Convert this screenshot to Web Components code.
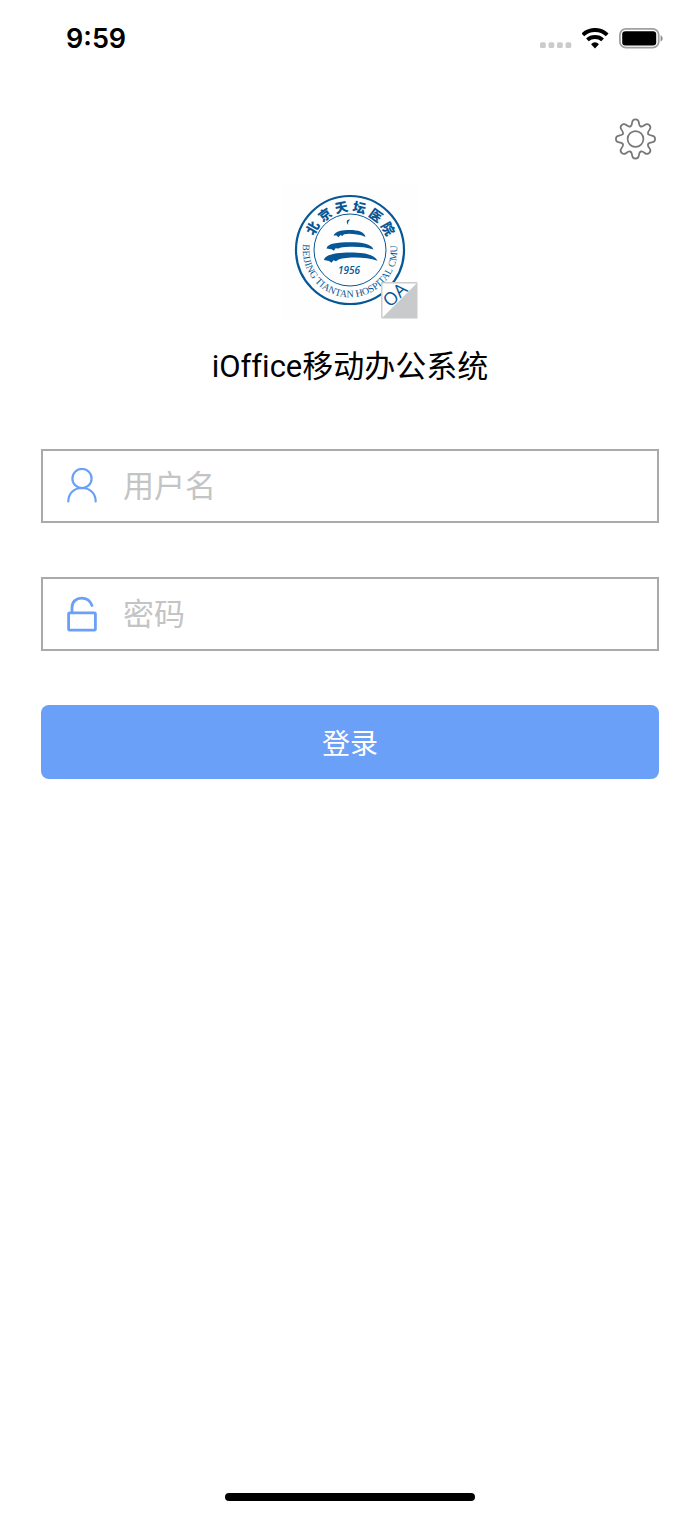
<!DOCTYPE html>
<html lang="zh-CN">
<head>
  <meta charset="utf-8">
  <meta name="viewport" content="width=device-width, initial-scale=1">
  <title>iOffice移动办公系统</title>
  <style>
    :root {
      --accent: #6ba0f8;
      --line: #aaaaaa;
      --hint: #c4c4c4;
      --logo-blue: #075796;
    }
    body {
      margin: 0;
      background: #fff;
      color: #000;
      font-family: Inter, "Noto Sans CJK SC", sans-serif;
    }
  </style>
</head>
<body>
  <login-page>
    <status-bar slot="status" time="9:59"></status-bar>
    <settings-button slot="tools" label="设置"></settings-button>
    <hospital-logo slot="logo"></hospital-logo>
    <span slot="title">iOffice移动办公系统</span>
    <login-field name="username" label="用户名">
      <svg slot="icon" width="30" height="36" viewBox="0 0 30 36" fill="none" stroke="#6ba0f8" stroke-width="2.2" stroke-linecap="round">
        <circle cx="15" cy="10.5" r="9.6"/>
        <path d="M1.3 33.5C1.3 25.5 7 20 15 20S28.7 25.5 28.7 33.5"/>
      </svg>
    </login-field>
    <login-field name="password" label="密码" type="password">
      <svg slot="icon" width="30" height="36" viewBox="0 0 30 36" fill="none" stroke="#6ba0f8" stroke-width="2.8" stroke-linecap="round" stroke-linejoin="round">
        <rect x="1.6" y="16.8" width="26.8" height="17.4" rx="1"/>
        <path d="M5 16.5V11.5C5 5.6 9.4 2.2 14.5 2.2C19.5 2.2 23.3 5 25 9.5"/>
      </svg>
    </login-field>
    <login-button>登录</login-button>
  </login-page>

  <script>
    class LoginPage extends HTMLElement {
      constructor() {
        super();
        this.attachShadow({ mode: 'open' });
      }

      connectedCallback() {
        this.shadowRoot.innerHTML = `
          <style>
            :host {
              display: flex;
              flex-direction: column;
              min-height: 100vh;
            }
            .tools {
              display: flex;
              justify-content: flex-end;
              padding: 38px 43px 0;
            }
            .brand {
              display: flex;
              flex-direction: column;
              align-items: center;
              padding: 23px 0 0;
            }
            h1 {
              margin: 26px 0 0;
              font-family: Roboto, "Noto Sans CJK SC", sans-serif;
              font-size: 31px;
              line-height: 44px;
              font-weight: 400;
              font-variant-ligatures: none;
            }
            form {
              display: flex;
              flex-direction: column;
              gap: 54px;
              padding: 60px 41px;
            }
            footer {
              display: flex;
              justify-content: center;
              margin-top: auto;
              padding-bottom: 14px;
            }
            .home {
              width: 250px;
              height: 8px;
              border-radius: 4px;
              background: #000;
            }
          </style>
          <slot name="status"></slot>
          <div class="tools"><slot name="tools"></slot></div>
          <div class="brand">
            <slot name="logo"></slot>
            <h1><slot name="title"></slot></h1>
          </div>
          <form><slot></slot></form>
          <footer><div class="home"></div></footer>
        `;
      }
    }

    class StatusBar extends HTMLElement {
      constructor() {
        super();
        this.attachShadow({ mode: 'open' });
      }

      connectedCallback() {
        const time = this.getAttribute('time') || '';

        this.shadowRoot.innerHTML = `
          <style>
            :host {
              display: flex;
              align-items: center;
              justify-content: space-between;
              height: 44px;
              padding: 17px 36px 19px 66px;
            }
            time {
              font-size: 27px;
              line-height: 44px;
              font-weight: 600;
            }
            .icons {
              display: flex;
              align-items: center;
              gap: 10px;
            }
          </style>
          <time>${time}</time>
          <div class="icons">
            <svg width="32" height="22" viewBox="0 0 32 22" fill="#cbcbcb">
              <rect x="0" y="14.2" width="5.8" height="5.8" rx="1.6"/>
              <rect x="8.5" y="14.2" width="5.8" height="5.8" rx="1.6"/>
              <rect x="17" y="14.2" width="5.8" height="5.8" rx="1.6"/>
              <rect x="25.5" y="14.2" width="5.8" height="5.8" rx="1.6"/>
            </svg>
            <svg width="27" height="22" viewBox="0 0 27 22" fill="none" stroke="#000" stroke-width="3.9">
              <path d="M0.8 6.8C7.5 0.3 18.5 0.3 25.2 6.8"/>
              <path d="M5.4 11.9C9.5 8.1 16.5 8.1 20.6 11.9"/>
              <path d="M13 20.4L9.1 16.3C11.2 13.5 14.8 13.5 16.9 16.3Z" fill="#000" stroke="none"/>
            </svg>
            <svg width="45" height="22" viewBox="0 0 45 22">
              <rect x="0.9" y="0.9" width="38.8" height="18.8" rx="6" fill="none" stroke="#a0a0a0" stroke-width="1.8"/>
              <rect x="3.2" y="3.2" width="34" height="14.2" rx="3.2"/>
              <path d="M41.6 7.2V13.6C44.3 12.2 44.3 8.6 41.6 7.2Z" fill="#8c8c8c"/>
            </svg>
          </div>
        `;
      }
    }

    class SettingsButton extends HTMLElement {
      constructor() {
        super();
        this.attachShadow({ mode: 'open' });
      }

      connectedCallback() {
        const label = this.getAttribute('label') || '';
        // one tooth, repeated round the hub
        const teeth = [0, 45, 90, 135, 180, 225, 270, 315]
          .map(angle => `<use href="#tooth" transform="rotate(${angle})"/>`)
          .join('');

        this.shadowRoot.innerHTML = `
          <style>
            :host {
              display: block;
            }
            button {
              display: block;
              padding: 0;
              border: 0;
              background: none;
            }
            svg {
              display: block;
            }
          </style>
          <button type="button" aria-label="${label}">
            <svg width="42" height="42" viewBox="-20.5 -21 42 42" fill="none" stroke="#777" stroke-width="1.7" stroke-linecap="round">
              <defs>
                <path id="tooth" d="M-5.2 -12.6C-3.9 -13.1 -3.6 -14.4 -3.4 -16.4C-3.1 -18.9 -2 -19.6 0 -19.6S3.1 -18.9 3.4 -16.4C3.6 -14.4 3.9 -13.1 5.2 -12.6"/>
              </defs>
              ${teeth}
              <circle r="7.9"/>
            </svg>
          </button>
        `;
      }
    }

    class HospitalLogo extends HTMLElement {
      constructor() {
        super();
        this.attachShadow({ mode: 'open' });
      }

      connectedCallback() {
        this.shadowRoot.innerHTML = `
          <style>
            :host {
              display: block;
            }
            svg {
              display: block;
              background: #fefefe;
              fill: var(--logo-blue);
            }
            .ring {
              fill: none;
              stroke: var(--logo-blue);
            }
            .cn {
              font: 900 13px "Noto Sans CJK SC", sans-serif;
            }
            .en {
              font: 10px "Liberation Serif", serif;
            }
            .year {
              font: italic 600 10px "Open Sans", sans-serif;
            }
            .oa {
              font: 18px "Open Sans", sans-serif;
            }
          </style>
          <svg width="136" height="136" viewBox="0 0 136 136">
            <defs>
              <path id="arc" d="M21.2 61A47.2 47.2 0 1 0 114.8 61"/>
            </defs>
            <circle class="ring" cx="68" cy="67" r="54" stroke-width="2.2"/>
            <circle class="ring" cx="68" cy="67" r="36" stroke-width="1"/>
            <text class="cn" x="31.6 40.5 54.1 70.1 85.8 98.4" y="53 39.4 30.6 28.1 32.4 42.6" rotate="-60 -36 -12 12 36 60">北京天坛医院</text>
            <text class="en"><textPath href="#arc">BEIJING TIANTAN HOSPITAL CMU</textPath></text>
            <path d="M68.5 36.6C64.5 36 63.8 39.5 66.2 41.8C65.8 39.6 66.4 38 68.5 36.6Z"/>
            <path d="M51.5 52.5C53.5 48 60.5 47 68 47C76 47 82.5 48.9 83.5 54C78 51.4 72 50.8 67 50.8C63 50.8 61 51.5 60.5 53L58.5 52L56.5 54.3L54.5 52.5Z"/>
            <path d="M44.5 65.5C45 60.5 55.5 59.2 68 59.2C80 59.2 89.5 60.7 91.5 66.5C84 64 76 63.6 68 63.8C62 64 58 64.6 56.5 65.4L53.5 65.3L52 67.8L49.5 66.3Z"/>
            <path d="M42 77C42.5 71.5 55 69.4 68 69.4C83 69.4 92.5 71.5 95.5 77.8C88 75 78 74.2 69 74.6C62 75 57 75.8 54 78.3L51.5 77.3L49.5 79.8L47 78Z"/>
            <text class="year" x="56" y="91">1956</text>
            <path d="M99.5 99.5H135L99.5 135Z" fill="#fff"/>
            <path d="M135.5 99.5V135.5H99.5Z" fill="#c9cacc"/>
            <path d="M99.8 135V99.8H135" fill="none" stroke="#c9cacc" stroke-width="1.4"/>
            <text class="oa" transform="translate(108 125) rotate(-43)">OA</text>
          </svg>
        `;
      }
    }

    class LoginField extends HTMLElement {
      constructor() {
        super();
        this.attachShadow({ mode: 'open' });
      }

      connectedCallback() {
        const name = this.getAttribute('name');
        const label = this.getAttribute('label') || '';
        const type = this.getAttribute('type') || 'text';

        this.shadowRoot.innerHTML = `
          <style>
            :host {
              display: flex;
              align-items: center;
              gap: 26px;
              box-sizing: border-box;
              height: 74px;
              padding: 0 24px;
              border: 2px solid var(--line);
            }
            label {
              display: flex;
            }
            input {
              flex: 1;
              min-width: 0;
              height: 46px;
              padding: 0 0 2px;
              border: 0;
              outline: 0;
              background: none;
              font-family: inherit;
              font-size: 31px;
            }
            input::placeholder {
              color: var(--hint);
              opacity: 1;
            }
          </style>
          <label for="${name}"><slot name="icon"></slot></label>
          <input id="${name}" name="${name}" type="${type}" placeholder="${label}" aria-label="${label}">
        `;
      }
    }

    class LoginButton extends HTMLElement {
      constructor() {
        super();
        this.attachShadow({ mode: 'open' });
      }

      connectedCallback() {
        this.shadowRoot.innerHTML = `
          <style>
            :host {
              display: block;
            }
            button {
              display: block;
              width: 100%;
              height: 74px;
              padding: 0;
              border: 0;
              border-radius: 8px;
              background: var(--accent);
              color: #fff;
              font-family: inherit;
              font-size: 28px;
            }
          </style>
          <button type="button"><slot></slot></button>
        `;
      }
    }

    customElements.define('login-page', LoginPage);
    customElements.define('status-bar', StatusBar);
    customElements.define('settings-button', SettingsButton);
    customElements.define('hospital-logo', HospitalLogo);
    customElements.define('login-field', LoginField);
    customElements.define('login-button', LoginButton);
  </script>
</body>
</html>
